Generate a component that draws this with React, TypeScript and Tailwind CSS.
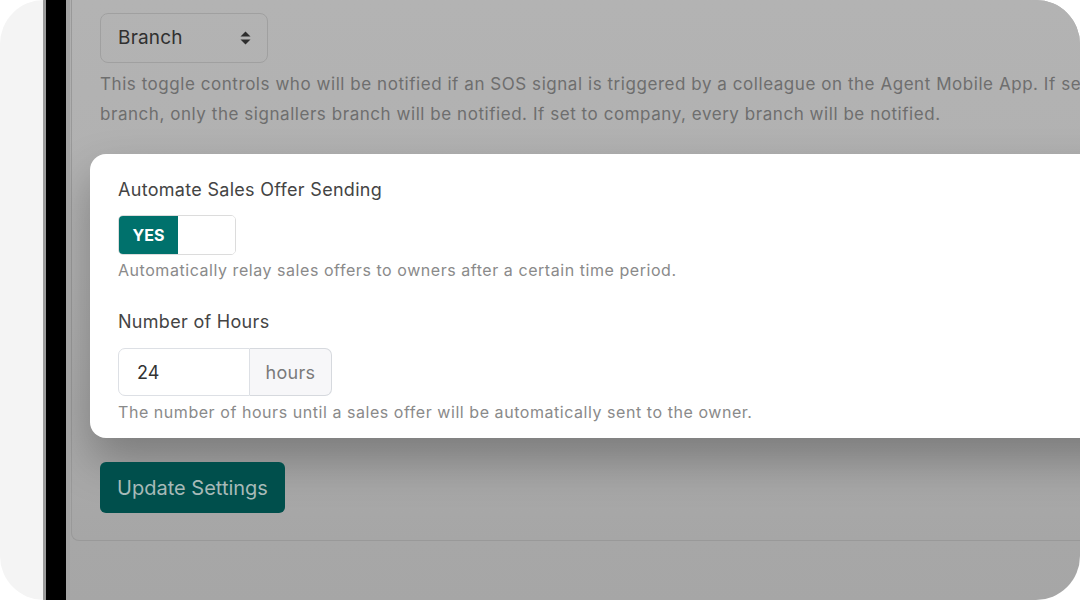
import React from "react";

export default function App() {
  return (
    <div className="w-[1080px] h-[600px] bg-white" style={{ fontFamily: "Inter, 'Noto Sans', sans-serif" }}>
      <div className="w-full h-full rounded-[44px] overflow-hidden flex">
        <div className="w-[43px] bg-[#f4f4f4] shrink-0" />
        <div className="w-[27px] shrink-0 flex">
          <div className="w-[3px] bg-[#9a9a9a]" />
          <div className="w-[20px] bg-black" />
          <div className="w-[4px] bg-[#a3a3a3]" />
        </div>
        <div className="flex-1 bg-gradient-to-b from-[#b0b0b0] to-[#a6a6a6] overflow-hidden">
          <div className="ml-[1px] w-[1100px] border-l border-b border-[#999999] rounded-bl-[8px] bg-gradient-to-b from-[#b3b3b3] via-[#b0b0b0] to-[#a6a6a6] pl-[28px] pt-[13px] pb-[27px]">
            <div className="w-[168px] h-[50px] rounded-[8px] border border-[#a0a0a0] flex items-center justify-between pl-[17px] pr-[16px]">
              <span className="text-[19px] text-[#303030] tracking-[0.2px]">Branch</span>
              <svg width="11" height="14" viewBox="0 0 11 14">
                <path d="M5.5 0.5 L10.5 5.5 L0.5 5.5 Z" fill="#2e2e2e" />
                <path d="M5.5 13.5 L10.5 8.5 L0.5 8.5 Z" fill="#2e2e2e" />
              </svg>
            </div>
            <div className="mt-[6px] text-[17px] leading-[30px] text-[#6e6e6e] whitespace-nowrap tracking-[0.55px]">
              <div>This toggle controls who will be notified if an SOS signal is triggered by a colleague on the Agent Mobile App. If set to</div>
              <div>branch, only the signallers branch will be notified. If set to company, every branch will be notified.</div>
            </div>
            <div className="mt-[25px] -ml-[10px] bg-white rounded-l-[16px] pl-[28px] pt-[22px] pb-[14px] shadow-[0_22px_45px_rgba(0,0,0,0.28)]">
              <div className="text-[18px] leading-[27px] text-[#444444] tracking-[0.3px]">Automate Sales Offer Sending</div>
              <div className="mt-[12px] w-[118px] h-[40px] rounded-[5px] border border-[#dcdcdc] flex overflow-hidden">
                <div className="w-[59px] h-full bg-[#00716c] flex items-center justify-center text-white font-bold text-[16px]">YES</div>
                <div className="flex-1 bg-white" />
              </div>
              <div className="mt-[3px] text-[16px] leading-[24px] text-[#8a8a8a] tracking-[0.55px]">Automatically relay sales offers to owners after a certain time period.</div>
              <div className="mt-[26px] text-[18px] leading-[27px] text-[#444444] tracking-[0.3px]">Number of Hours</div>
              <div className="mt-[13px] flex h-[48px] w-[214px]">
                <div className="w-[132px] h-full border border-[#dde0e5] rounded-l-[7px] flex items-center pl-[18px] text-[18px] text-[#333333]">24</div>
                <div className="flex-1 h-full border border-l-0 border-[#d6d9de] rounded-r-[7px] bg-[#f7f7f9] flex items-center justify-center text-[18px] text-[#7a7a7a] tracking-[0.3px]">hours</div>
              </div>
              <div className="mt-[4px] text-[16px] leading-[24px] text-[#8a8a8a] tracking-[0.55px]">The number of hours until a sales offer will be automatically sent to the owner.</div>
            </div>
            <div className="mt-[24px] w-[185px] h-[51px] rounded-[6px] bg-[#004f4c] flex items-center justify-center text-[20px] text-[#a7bab8]">Update Settings</div>
          </div>
        </div>
      </div>
    </div>
  );
}
